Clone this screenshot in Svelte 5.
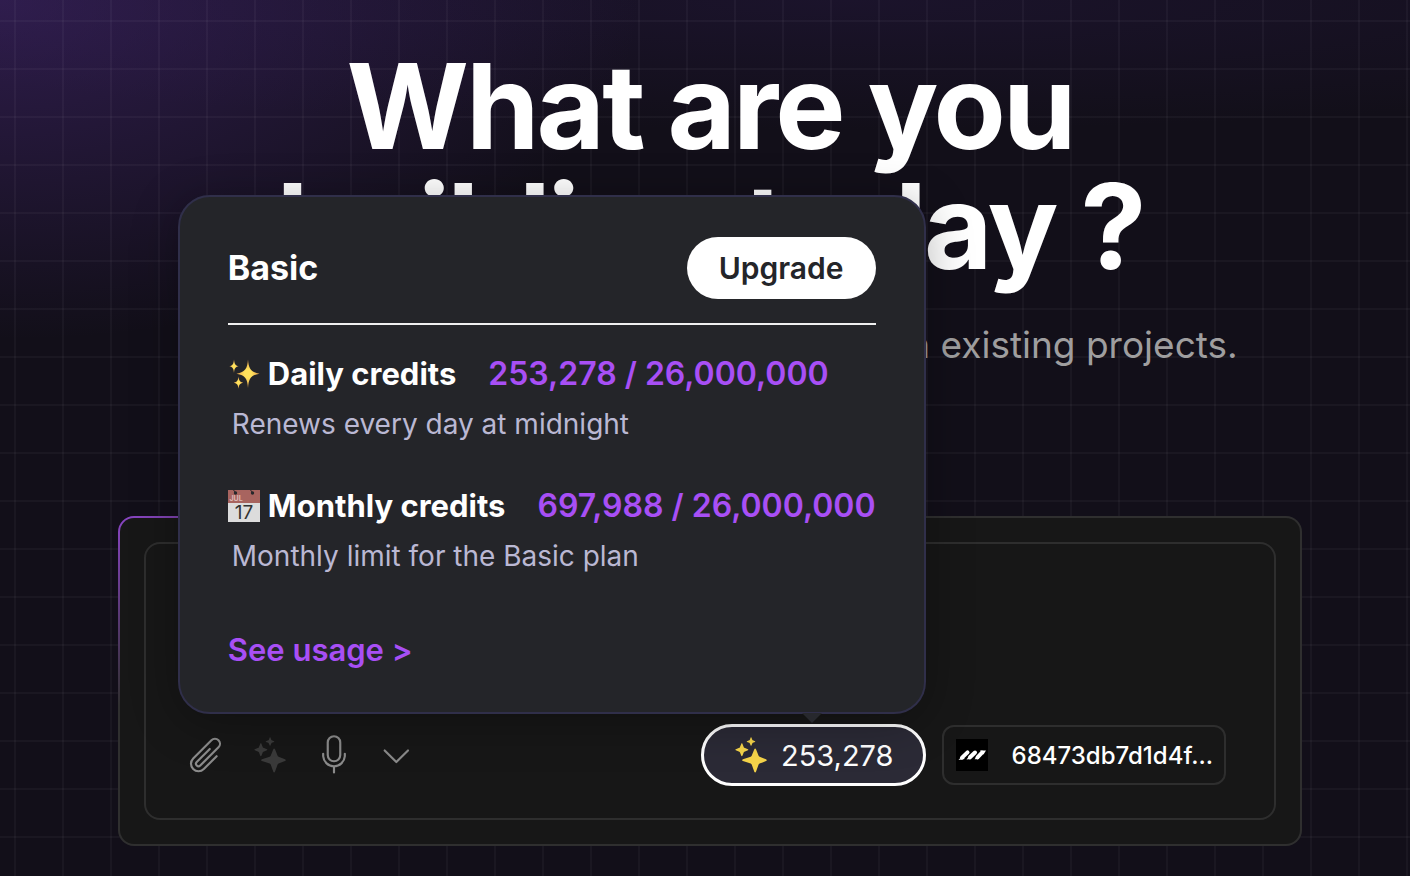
<script>
  const plan = 'Basic';
  const credits = [
    { icon: 'sparkles', label: 'Daily credits', used: '253,278', total: '26,000,000', note: 'Renews every day at midnight' },
    { icon: 'calendar', label: 'Monthly credits', used: '697,988', total: '26,000,000', note: `Monthly limit for the ${plan} plan` }
  ];
  let prompt = $state('');
  let open = $state(true);
</script>

{#snippet stars()}
  <svg class="stars" viewBox="0 0 32 36" aria-hidden="true">
    <path d="M19.3 12.2c.4-1 1.300-1 1.700 0l2.600 6.600c.2.500.500.800 1 1l6.400 2.500c1 .400 1 1.400 0 1.800l-6.400 2.500c-.5.200-.8.500-1 1L21 34.800c-.4 1-1.300 1-1.700 0l-2.600-7.200c-.2-.5-.5-.8-1-1l-7.800-2.500c-1-.4-1-1.400 0-1.800l7.800-2.500c.5-.2.8-.5 1-1z" />
    <path d="M6.300 6.800c.2-.6.900-.6 1.100 0l1.400 3.400c.1.300.3.500.6.600l3.500 1.400c.6.200.6.900 0 1.100l-3.500 1.400c-.3.100-.5.300-.6.600l-1.400 3.400c-.2.600-.9.600-1.100 0l-1.400-3.400c-.1-.3-.3-.5-.6-.6L.8 13.300c-.6-.2-.6-.9 0-1.100l3.500-1.400c.3-.1.500-.3.600-.6z" />
    <path d="M15.700.5c.1-.4.600-.4.700 0l1 2.400c.1.200.2.300.4.400l2.200.9c.4.100.4.600 0 .7l-2.200.9c-.2.100-.3.200-.4.400l-1 2.300c-.1.400-.6.400-.7 0l-1-2.300c-.1-.2-.2-.3-.4-.4l-2.300-.9c-.4-.1-.4-.6 0-.7l2.300-.9c.2-.1.300-.2.400-.4z" />
  </svg>
{/snippet}

<main>
  <h1>What are you<br />building today ?</h1>
  <p class="lead">Build an app by chatting with AI or work on existing projects.</p>

  <section class="panel">
    <div class="composer">
      <textarea aria-label="Prompt" bind:value={prompt}></textarea>
      <div class="toolbar">
        <div class="tools">
          <button type="button" aria-label="Attach a file">
            <svg viewBox="0 0 24 24" class="line"><path d="m18.375 12.739-7.693 7.693a4.500 4.500 0 0 1-6.364-6.364l10.940-10.940A3 3 0 1 1 19.500 7.372L8.552 18.320m.009-.010-.010.010m5.699-9.941-7.810 7.810a1.500 1.500 0 0 0 2.112 2.130" /></svg>
          </button>
          <button type="button" aria-label="Enhance prompt" disabled>{@render stars()}</button>
          <button type="button" aria-label="Dictate">
            <svg viewBox="0 0 24 24" class="line"><path d="M12 18.750a6.500 6.500 0 0 0 6.500-6v-1.500m-6.500 7.500a6.500 6.500 0 0 1-6.500-6v-1.500m6.500 7.500v3.750M12 15.750a3.750 3.750 0 0 1-3.750-3.750V4.500a3.750 3.750 0 1 1 7.500 0V12A3.750 3.750 0 0 1 12 15.750Z" /></svg>
          </button>
          <button type="button" aria-label="More options">
            <svg viewBox="0 0 24 24" class="line"><path d="m18 9.250-7 7-7-7" /></svg>
          </button>
        </div>

        <div class="account">
          <div class="credits">
            <button type="button" class="balance" aria-expanded={open} onclick={() => (open = !open)}>
              {@render stars()}
              <span>253,278</span>
            </button>
            {#if open}
              <div class="popover" role="dialog" aria-label="Credits">
                <header>
                  <h2>{plan}</h2>
                  <button type="button" class="upgrade">Upgrade</button>
                </header>
                {#each credits as credit}
                  <div class="credit">
                    <div class="row">
                      <h3>
                        {#if credit.icon === 'sparkles'}
                          <svg class="emoji" viewBox="0 0 32 32" aria-hidden="true">
                            <defs>
                              <radialGradient id="gold"><stop offset="0.3" stop-color="#ffe15c" /><stop offset="1" stop-color="#e8a04a" /></radialGradient>
                            </defs>
                            <g fill="url(#gold)">
                              <path d="M20 1.500c.7 9 2.500 12.500 11.500 14.200-9 1.600-10.800 5-11.500 14.300-.7-9.300-2.500-12.700-11.500-14.300 9-1.700 10.800-5.200 11.500-14.200z" />
                              <path d="M6 1.500c.5 4.500 1.200 6 4.700 6.800C7.200 9.100 6.500 10.500 6 15c-.5-4.500-1.200-5.900-4.700-6.700C4.800 7.500 5.500 6 6 1.500z" />
                              <path d="M10.500 18.500c.5 4 1.300 5.400 4.700 6.200-3.400.8-4.200 2.100-4.700 6-.5-3.900-1.300-5.200-4.700-6 3.400-.8 4.200-2.200 4.700-6.200z" />
                            </g>
                          </svg>
                        {:else}
                          <svg class="emoji" viewBox="0 0 32 32" aria-hidden="true">
                            <rect width="32" height="32" fill="#dcdcdc" />
                            <rect width="32" height="13" fill="#a8645f" />
                            <circle cx="7.500" cy="3" r="1.700" fill="#26272b" />
                            <circle cx="24.500" cy="3" r="1.700" fill="#26272b" />
                            <path d="M5.500 0l2 2.500M22.500 0l2 2.500" stroke="#26272b" />
                            <text x="1.500" y="11" class="month">JUL</text>
                            <text x="16" y="28.500" class="day">17</text>
                          </svg>
                        {/if}
                        {credit.label}
                      </h3>
                      <strong>{credit.used} / {credit.total}</strong>
                    </div>
                    <p>{credit.note}</p>
                  </div>
                {/each}
                <a href="#usage">See usage &gt;</a>
              </div>
            {/if}
          </div>

          <button type="button" class="project">
            <svg viewBox="0 0 32 32" aria-hidden="true">
              <rect width="32" height="32" fill="#000" />
              <path
                fill="none"
                stroke="#fff"
                stroke-width="4"
                stroke-linecap="round"
                d="M6 18.600 11.500 13.400M14 18.300 19 13.500M21.500 18.300 26 13.700"
              />
              <path fill="#fff" d="M2.500 21 7 16l1.500 4zM24 11.600h6L27.500 15.500zM10.500 20.500l3.500-4.500 1 4zM18.500 20.300l3.500-4.500 1 4.200z" />
            </svg>
            <span>68473db7d1d4f...</span>
          </button>
        </div>
      </div>
    </div>
  </section>
</main>

<style>
  :global(body) {
    margin: 0;
    background: #120f19;
  }
  main {
    min-height: 100vh;
    box-sizing: border-box;
    padding: 46px 48px 30px 58px;
    display: flex;
    flex-direction: column;
    align-items: center;
    font-family: Inter, "Liberation Sans", sans-serif;
    color: #fff;
    background:
      linear-gradient(90deg, rgba(255, 255, 255, 0.035) 2px, transparent 2px) 14px 20px / 48px 48px,
      linear-gradient(rgba(255, 255, 255, 0.035) 2px, transparent 2px) 14px 20px / 48px 48px,
      radial-gradient(ellipse 640px 340px at 0 0, rgba(88, 48, 150, 0.4), transparent),
      radial-gradient(ellipse 1100px 130px at 60% 0, rgba(50, 30, 90, 0.28), transparent),
      #120f19;
  }
  h1, h2, h3, p {
    margin: 0;
  }
  button {
    font: inherit;
    color: inherit;
    background: none;
    border: 0;
    padding: 0;
    cursor: pointer;
  }
  h1 {
    font-size: 118px;
    line-height: 120px;
    font-weight: 700;
    letter-spacing: -0.025em;
    text-align: center;
  }
  .lead {
    margin-top: 31px;
    font-size: 37px;
    line-height: 56px;
    color: #9f9e9f;
    white-space: nowrap;
  }
  .panel {
    width: 100%;
    max-width: 1184px;
    box-sizing: border-box;
    margin-top: auto;
    padding: 24px;
    border: 2px solid transparent;
    border-radius: 16px;
    background:
      linear-gradient(#171717, #171717) padding-box,
      radial-gradient(ellipse 420px 190px at 0 0, #8a45c4, #2f2f2f) border-box;
  }
  .composer {
    border: 2px solid #2e2e2e;
    border-radius: 16px;
    padding: 0 48px 32px 40px;
    display: flex;
    flex-direction: column;
  }
  textarea {
    height: 180px;
    box-sizing: border-box;
    border: 0;
    outline: 0;
    resize: none;
    padding: 24px 0;
    background: none;
    color: #fff;
    font: 28px Inter, sans-serif;
  }
  .toolbar, .tools, .account, .row, header, h3, .balance, .project {
    display: flex;
    align-items: center;
  }
  .toolbar {
    justify-content: space-between;
  }
  .tools {
    gap: 24px;
  }
  .tools button {
    width: 40px;
    height: 40px;
    display: grid;
    place-items: center;
    color: #8b8b8b;
  }
  .tools button:disabled {
    color: #3a3a3a;
  }
  .line {
    width: 40px;
    height: 40px;
    fill: none;
    stroke: currentColor;
    stroke-width: 1.3;
    stroke-linecap: round;
    stroke-linejoin: round;
  }
  .stars {
    width: 32px;
    height: 36px;
    fill: currentColor;
  }
  .account {
    gap: 16px;
  }
  .credits {
    position: relative;
  }
  .balance {
    height: 62px;
    gap: 14px;
    padding: 0 29px 0 31px;
    border: 3px solid #fff;
    border-radius: 31px;
    background: #2b2a36;
    font-size: 29px;
  }
  .balance .stars {
    color: #f6d54a;
  }
  .project {
    height: 60px;
    gap: 24px;
    padding: 0 11px 0 12px;
    border: 2px solid #2e2e2e;
    border-radius: 12px;
    font-size: 24px;
    font-weight: 500;
  }
  .project svg {
    width: 32px;
    height: 32px;
  }
  .popover {
    position: absolute;
    right: 0;
    bottom: calc(100% + 10px);
    width: max-content;
    box-sizing: border-box;
    padding: 40px 48px 42px;
    border: 2px solid #302f4a;
    border-radius: 32px;
    background: #242529;
    box-shadow: 0 8px 48px rgba(0, 0, 0, 0.3);
  }
  .popover::after {
    content: "";
    position: absolute;
    top: calc(100% + 1px);
    right: 102px;
    border: 10px solid transparent;
    border-bottom: 0;
    border-top-color: #27282d;
  }
  header {
    justify-content: space-between;
    padding-bottom: 24px;
    margin-bottom: 29px;
    border-bottom: 2px solid #f0f0f0;
  }
  h2 {
    font-size: 34px;
    line-height: 40px;
  }
  .upgrade {
    height: 62px;
    padding: 0 32px;
    border-radius: 31px;
    background: #fff;
    color: #242529;
    font-size: 30px;
    font-weight: 600;
  }
  .credit {
    margin-bottom: 32px;
  }
  .row {
    justify-content: flex-start;
    gap: 32px;
    font-size: 32px;
    line-height: 40px;
  }
  h3 {
    gap: 8px;
    font-size: 31px;
    font-weight: 700;
  }
  .emoji {
    width: 32px;
    height: 32px;
  }
  .month {
    font: 700 7px Inter, sans-serif;
    fill: #dcb9b6;
  }
  .day {
    font: 400 19px Inter, sans-serif;
    fill: #333;
    text-anchor: middle;
  }
  strong {
    font-weight: 600;
    color: #a84ff5;
  }
  .credit p {
    padding: 10px 4px;
    font-size: 28px;
    line-height: 40px;
    color: #bab8d3;
  }
  a {
    display: inline-block;
    margin-top: 12px;
    font-size: 31px;
    line-height: 40px;
    font-weight: 600;
    color: #a84ff5;
    text-decoration: none;
  }
</style>
